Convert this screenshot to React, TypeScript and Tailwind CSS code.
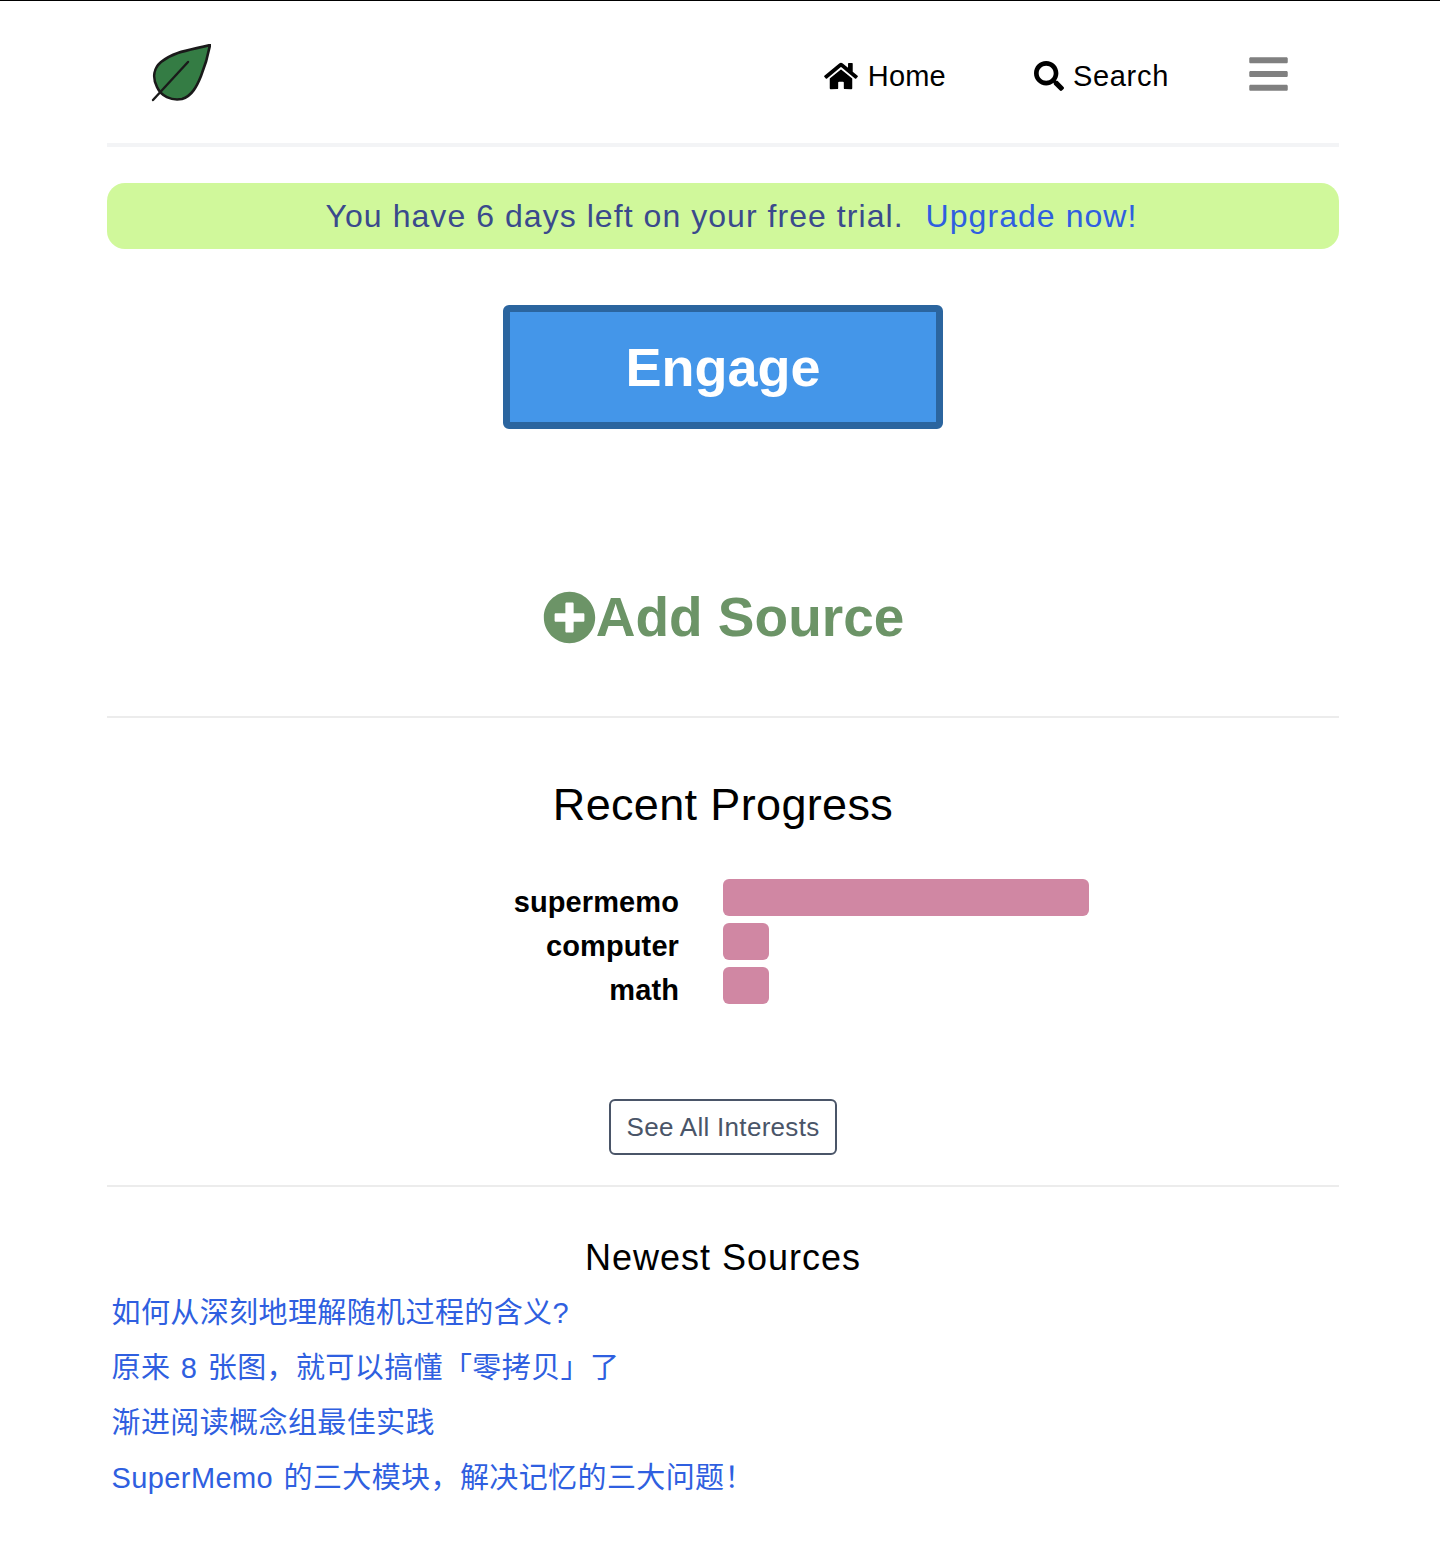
import { FaHome, FaSearch, FaBars, FaPlusCircle } from "react-icons/fa";

const interests = [
  { name: "supermemo", w: "w-[366px]" },
  { name: "computer", w: "w-[45.5px]" },
  { name: "math", w: "w-[45.5px]" },
];
const sources = [
  "如何从深刻地理解随机过程的含义?",
  "原来 8 张图，就可以搞懂「零拷贝」了",
  "渐进阅读概念组最佳实践",
  "SuperMemo 的三大模块，解决记忆的三大问题！",
];

export default function App() {
  return (
    <div className="min-h-[1565px] bg-white border-t border-black font-['Liberation_Sans','Noto_Sans_CJK_SC',sans-serif] text-black">
      <div className="mx-[107px] w-[1232px]">
        <nav className="h-[142px] flex items-start border-b-4 border-[#f3f4f6] box-content">
          <svg className="ml-[44px] mt-[43px] w-[60px] h-[60px]" viewBox="0 0 60 60">
            <path d="M59 1 C40 6 24 7 10 18 C3 24 1 33 6 43 C10 52 20 57 31 55 C41 52 46 42 50 32 C54 22 57 12 59 1 Z" fill="#347c44" stroke="#1a1a1a" strokeWidth="2.6" strokeLinejoin="round" />
            <path d="M37 18 L2 56" stroke="#1a1a1a" strokeWidth="2.4" strokeLinecap="round" />
          </svg>
          <div className="ml-auto flex items-start mt-[57px]">
            <a className="flex items-center text-[29px] leading-[36px] tracking-[0.2px]">
              <FaHome className="w-[34px] h-[30px] mr-[10px]" />Home
            </a>
            <a className="flex items-center text-[29px] leading-[36px] tracking-[0.7px] ml-[88px]">
              <FaSearch className="w-[30px] h-[30px] mr-[9px]" />Search
            </a>
            <FaBars className="w-[39px] h-[44px] ml-[80px] mr-[51px] -mt-[6px] text-[#808080]" />
          </div>
        </nav>

        <div className="mt-[36px] h-[66px] rounded-[18px] bg-[#d0f89b] pl-[17px] flex items-center justify-center text-[32px] tracking-[1.05px] text-[#3a4a8c]">
          <span>You have 6 days left on your free trial.</span>
          <a className="ml-[22px] text-[#2f5fe0]">Upgrade now!</a>
        </div>

        <div className="mt-[56px] flex justify-center">
          <button className="w-[440px] h-[124px] rounded-[6px] border-[7px] border-[#2b659f] bg-[#4496e9] text-white font-bold text-[54px]">
            Engage
          </button>
        </div>

        <div className="mt-[156px] pl-[1px] flex items-center justify-center text-[#6c9467] font-bold text-[55px] leading-[64px]">
          <FaPlusCircle className="w-[53px] h-[53px]" />
          <span>Add Source</span>
        </div>

        <hr className="mt-[67px] border-t-2 border-[#ececec]" />

        <h2 className="mt-[60px] text-center text-[45px] leading-[54px] tracking-[0.35px]">Recent Progress</h2>

        <div className="mt-[47px] flex flex-col gap-[7px]">
          {interests.map((i) => (
            <div key={i.name} className="flex h-[37px]">
              <div className="w-[572px] pt-[8px] text-right font-bold text-[29px] leading-[30px] tracking-[0.1px]">{i.name}</div>
              <div className={`ml-[44px] h-[37px] rounded-[6px] bg-[#d087a3] ${i.w}`} />
            </div>
          ))}
        </div>

        <div className="mt-[95px] flex justify-center">
          <a className="h-[56px] px-[15.5px] rounded-[6px] border-2 border-[#4a5568] text-[#4a5568] flex items-center text-[26px] tracking-[0.3px]">
            See All Interests
          </a>
        </div>

        <hr className="mt-[30px] border-t-2 border-[#ececec]" />

        <h3 className="mt-[49px] text-center text-[36px] leading-[44px] tracking-[1px]">Newest Sources</h3>

        <div className="mt-[6px] pl-[4.5px] flex flex-col text-[29px] leading-[55px] tracking-[0.4px] [word-spacing:2px] text-[#2f5fe0]">
          {sources.map((s) => (
            <a key={s}>{s}</a>
          ))}
        </div>
      </div>
    </div>
  );
}
